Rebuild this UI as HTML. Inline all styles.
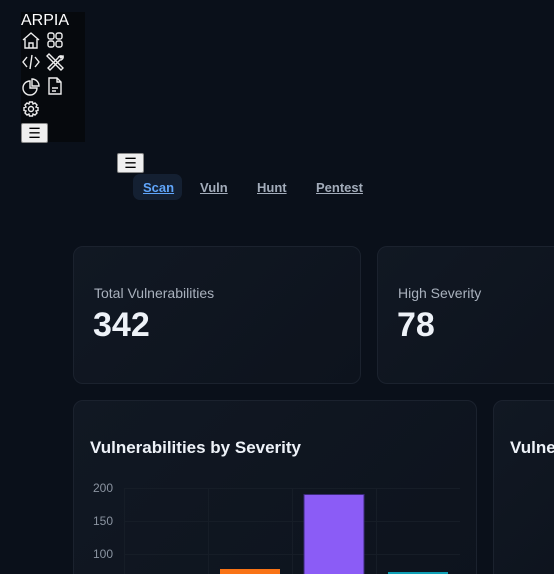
<!DOCTYPE html><html><head><style>
*{margin:0;padding:0;box-sizing:border-box}
html,body{width:554px;height:574px;overflow:hidden}
body{background:#0a101a;font-family:"Liberation Sans",sans-serif;position:relative}
#w{position:absolute;left:0;top:0;width:554px;height:574px;overflow:hidden}
.abs{position:absolute}
.sb{left:21px;top:12px;width:64px;height:130px;background:#06090d}
.btn{background:#efefef;border:1px solid #888;border-radius:2px;width:27px;height:20px;color:#000;font-size:14px;text-align:center;line-height:18px}
.card{background:linear-gradient(135deg,#111823,#0d131d);border:1px solid #1b222e;border-radius:10px}
.tab{top:180px;font-size:13px;font-weight:bold;text-decoration:underline;color:#a3acba}
.lbl{font-size:14px;color:#a9b1bd}
.num{font-size:34px;font-weight:bold;color:#eef2f8}
.ax{font-size:12px;color:#8a93a0;left:93px}
svg{position:absolute}
</style></head><body><div id="w">
<div class="abs sb"></div>
<div class="abs" style="left:21px;top:12px;color:#fff;font-size:16px">ARPIA</div>
<svg style="left:21px;top:31px" width="64" height="90" fill="none" stroke="#eee" stroke-width="1.4">
<path d="M2 9 L10 2 L18 9 M4 8 V17 H16 V8 M8 17 V12 H12 V17"/>
<rect x="27" y="2" width="6" height="6" rx="2"/><rect x="35" y="2" width="6" height="6" rx="2"/><rect x="27" y="10" width="6" height="6" rx="2"/><rect x="35" y="10" width="6" height="6" rx="2"/>
<path d="M6 26 L2 31 L6 36 M14 26 L18 31 L14 36 M11 24 L9 38"/>
<path d="M26 25 L37 36 L40 39 L42 37 L39 34 L28 23 Z M41 25 A3 3 0 0 0 37 27 L27 37 L29 39 L39 29 A3 3 0 0 0 42 25 L40 27 L39 26 Z"/>
<path d="M9 50 A7 7 0 1 0 16 57 H9 Z M11 48 A7 7 0 0 1 18 55 H11 Z"/>
<path d="M28 47 H36 L40 51 V63 H28 Z M36 47 V51 H40 M31 57 H37 M31 60 H35"/>
<circle cx="10" cy="78" r="2.5"/><path d="M8.5 71 H11.5 L12 73 L14 72 L16 74 L15 76 L17 76.5 V79.5 L15 80 L16 82 L14 84 L12 83 L11.5 85 H8.5 L8 83 L6 84 L4 82 L5 80 L3 79.5 V76.5 L5 76 L4 74 L6 72 L8 73 Z"/>
</svg>
<div class="abs btn" style="left:21px;top:123px">☰</div>
<div class="abs btn" style="left:117px;top:153px">☰</div>
<div class="abs" style="left:133px;top:174px;width:49px;height:26px;background:#142032;border-radius:7px"></div>
<div class="abs tab" style="left:143px;color:#60a5fa">Scan</div>
<div class="abs tab" style="left:200px">Vuln</div>
<div class="abs tab" style="left:257px">Hunt</div>
<div class="abs tab" style="left:316px">Pentest</div>
<div class="abs card" style="left:73px;top:246px;width:288px;height:138px"></div>
<div class="abs card" style="left:377px;top:246px;width:200px;height:138px"></div>
<div class="abs lbl" style="left:94px;top:285px">Total Vulnerabilities</div>
<div class="abs num" style="left:93px;top:306px">342</div>
<div class="abs lbl" style="left:398px;top:285px">High Severity</div>
<div class="abs num" style="left:397px;top:306px">78</div>
<div class="abs card" style="left:73px;top:400px;width:404px;height:200px"></div>
<div class="abs card" style="left:493px;top:400px;width:100px;height:200px"></div>
<div class="abs" style="left:90px;top:438px;font-size:17px;font-weight:bold;color:#eef2f8">Vulnerabilities by Severity</div>
<div class="abs" style="left:510px;top:438px;font-size:17px;font-weight:bold;color:#eef2f8">Vulnerabilities</div>
<div class="abs ax" style="top:481px">200</div>
<div class="abs ax" style="top:514px">150</div>
<div class="abs ax" style="top:547px">100</div>
<svg style="left:0;top:0" width="554" height="574">
<g stroke="#161d27" stroke-width="1">
<path d="M124 488.5H460M124 521.5H460M124 554.5H460M124.5 488V574M208.5 488V574M292.5 488V574M376.5 488V574"/></g>
<rect x="220" y="569" width="60" height="10" fill="#f97316"/>
<rect x="304" y="494.5" width="60" height="90" fill="#8b5cf6" stroke="#3b2a7a"/>
<rect x="388" y="572" width="60" height="10" fill="#0e9fb5"/>
</svg>
</div></body></html>
